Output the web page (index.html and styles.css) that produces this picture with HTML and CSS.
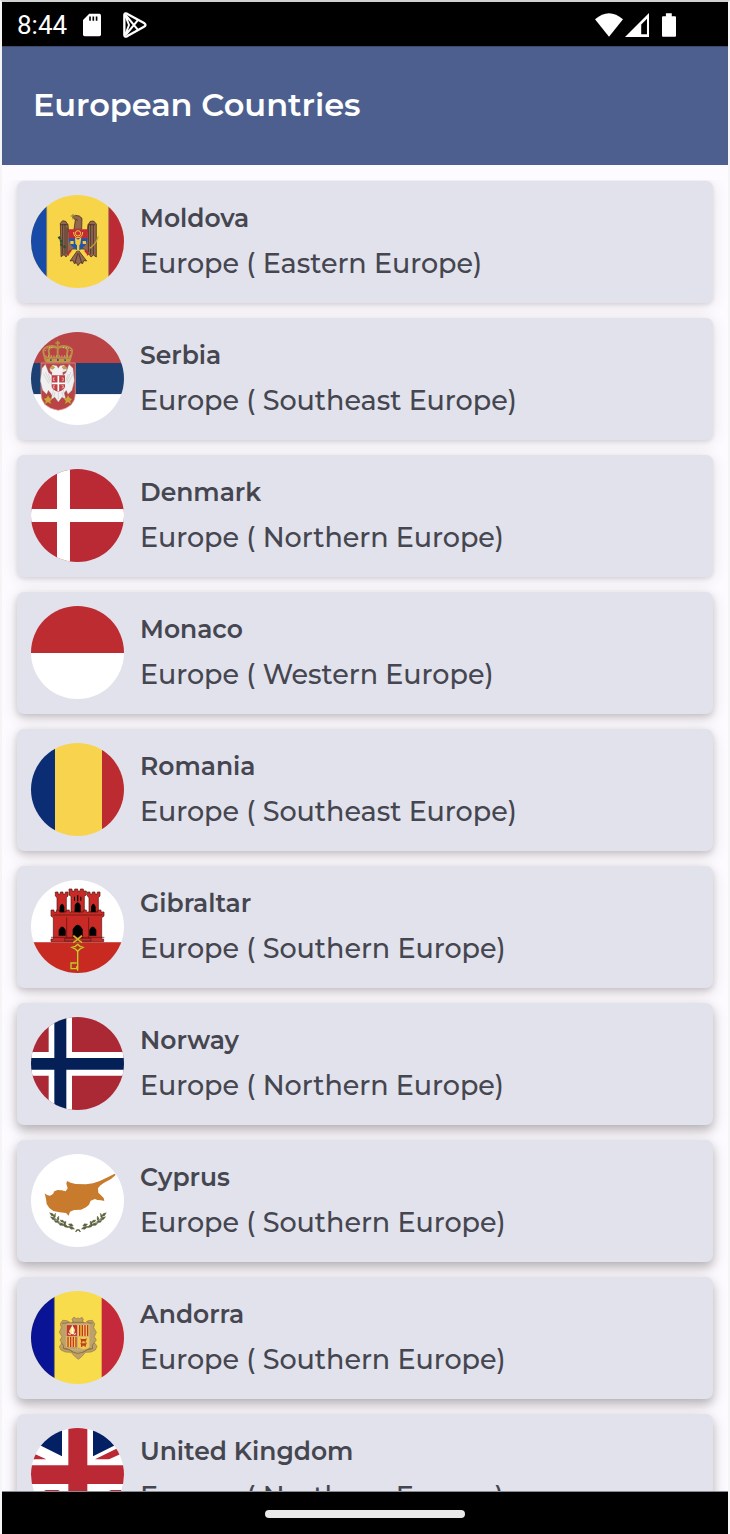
FILE: index.html
```html
<!DOCTYPE html>
<html lang="en">
<head>
<meta charset="utf-8">
<meta name="viewport" content="width=device-width, initial-scale=1">
<title>European Countries</title>
<link rel="stylesheet" href="styles.css">
</head>
<body>
<div class="status">
  <span class="time">8:44</span>
  <svg class="sd" viewBox="248 38 55 70" aria-hidden="true"><path fill="#fff" d="M267 39h31q5 0 5 5v58q0 5-5 5h-45q-5 0-5-5V58z"/><path d="M267 47h5v13h-5zM277 47h5v13h-5zM287 47h5v13h-5z"/></svg>
  <svg class="play" viewBox="368 34 72 78" aria-hidden="true"><g fill="none" stroke="#fff" stroke-width="7" stroke-linejoin="round"><path d="M372 43q0-6 8-4l51 28q9 6 0 11l-51 29q-8 3-8-4z"/><path stroke-width="6" d="M376 43l38 46M376 103l38-46M374 42l12 31-12 31"/></g></svg>
  <span class="signals">
    <svg class="wifi" viewBox="106 36 84 70" aria-hidden="true"><path fill="#fff" d="M148 106L106 54q42-36 84 0z"/></svg>
    <svg class="cell" viewBox="196 37 71 71" aria-hidden="true"><path fill="#fff" d="M267 37v71h-71z"/><path d="M261 54v46h-17V71z"/></svg>
    <svg class="battery" viewBox="306 36 43 72" aria-hidden="true"><path fill="#fff" d="M318 36h18v9h10q3 0 3 3v57q0 3-3 3h-37q-3 0-3-3V48q0-3 3-3h9z"/></svg>
  </span>
</div>
<header class="appbar"><h1>European Countries</h1></header>
<main class="content">
<ul class="list">
<li class="card">
  <svg class="flag" viewBox="34 27 279 279" role="img" aria-label="Flag of Moldova">
    <path fill="#f8d548" d="M34 27h279v279H34z"/><path fill="#184aa8" d="M34 27h47v279H34z"/><path fill="#bc2a36" d="M267 27h46v279h-46z"/><path stroke="#8a8060" stroke-width="2" d="M81 27v279M267 27v279"/>
    <g stroke="#30211b" stroke-width="2" stroke-linejoin="round">
      <path fill="#93684f" d="M122 112l7-8 9 2 7 10 2 22h56l2-22 7-10 10-1 8 9v99l-9-6-7 6-7-10-13-14h-36l-12 14-7 10-6-7-9 6z"/>
      <path fill="#93684f" d="M163 130l4-28-8-9 8-5 12 2 8 7-1 33z"/>
      <path fill="#93684f" d="M175 191l-24 34 9-1 4 9 6-3 5 9 7-9 7 3 3-9 9 1z"/>
      <path fill="none" d="M129 117v88M136 115v91M142 125v78M206 117v81M213 115v90M221 117v88M122 116h22M206 116h20M168 100l6 3M174 202l-8 28M177 202l9 28"/>
    </g>
    <path fill="#c22b36" d="M147 130h57v28h-57z"/><path fill="#1f55ad" d="M147 157h57q0 24-28 37-29-13-29-37z"/>
    <path fill="#f3c83c" d="M166 154l9 7 10-7-3 20-3 4v16h-7v-16l-5-5zM152 165h10v9h-10zM189 165h10v9h-10z"/>
    <circle cx="175" cy="142" r="8" fill="#cc3336" stroke="#f3c83c" stroke-width="3"/><path fill="none" stroke="#f3c83c" stroke-width="3" d="M162 138q0 16 13 17 14-1 14-17"/>
    <path stroke="#bd2c35" stroke-width="8" d="M154 193l-10 14M196 193l10 14"/><path stroke="#f0cc43" stroke-width="4" d="M159 194l-10 13M190 194l11 13"/>
    <path fill="none" stroke="#28513a" stroke-width="7" stroke-dasharray="8 3" d="M117 152q11 17 8 24 8 3 12 10"/><path fill="none" stroke="#c4a137" stroke-width="4" d="M236 151q-7 22-20 31l-6 5"/><path stroke="#8c783e" stroke-width="3" d="M153 90h14M160 84v16"/>
  </svg>
  <div class="info"><h2>Moldova</h2><p>Europe ( Eastern Europe)</p></div>
</li>
<li class="card">
  <svg class="flag" viewBox="34 28 279 279" role="img" aria-label="Flag of Serbia">
    <path fill="#b94345" d="M34 28h279v93H34z"/><path fill="#1d4073" d="M34 121h279v94H34z"/><path fill="#fff" d="M34 215h279v92H34z"/>
    <path fill="#b94345" stroke="#e5a3a0" stroke-width="2" d="M64 121h103v91q0 43-51 51-52-8-52-51z"/>
    <g fill="#f0f0f0" stroke="#a5a2a5" stroke-width="1"><path d="M92 145l-2-8 9-10 12 2 5 8 5-8 12-2 9 10-2 8-11 4 1 9 9-8 9-25 12 12 4 37-7 29-12 12-5-12-7 9-9 15-1-9-10 12-9-12-2 9-9-15-7-9-5 12-12-12-7-29 5-37 10-12 10 25 10 8v-9z"/><path d="M103 196l-9 35 11-8 11 15 11-15 12 8-10-35z"/><path fill="none" d="M71 153l17 30M77 148l14 30M86 154l7 19M161 153l-17 30M154 148l-13 30M146 154l-7 19M106 208l-4 14M116 207v22M126 208l5 14"/></g>
    <path fill="#bf3f46" d="M96 158h40v34q-3 11-20 15-17-4-20-15z"/><path stroke="#fff" stroke-width="5" d="M116 159v47M96 182h40"/><path fill="none" stroke="#f5d6d1" stroke-width="2" d="M106 166h-5v8h5M126 166h5v8h-5M106 189h-5v7h5M126 189h5v7h-5"/>
    <g fill="#d1a23b" stroke="#8c642c" stroke-width="1"><path d="M85 217l5 8 8 5-6 5 3 10-10-6-10 6 3-10-6-7 9-3zM145 217l5 8 8 5-6 5 3 10-10-6-10 6 3-10-6-7 9-3zM89 137l8-7 8 3-5 7zM143 137l-9-7-7 3 5 7z"/></g>
    <g fill="none" stroke="#b89046" stroke-width="6"><path d="M78 114l-7-25q-2-12 13-17 19-6 30 4 12-10 30-4 16 5 13 17l-7 25zM91 110L87 84q1-16 27-8M139 110l5-26q-3-16-30-8M114 74v37"/><path stroke-width="5" d="M114 54v18M107 61h14M78 105h73"/><path stroke="#c39a4c" stroke-width="11" d="M80 114h70"/></g><path fill="none" stroke="#fff1d4" stroke-width="3" stroke-dasharray="2 6" d="M76 85q7-14 27-9M153 85q-8-14-27-9M78 100h75"/><path fill="#365384" d="M112 108h5v7h-5zM91 110h5v5h-5zM134 110h5v5h-5z"/>
  </svg>
  <div class="info"><h2>Serbia</h2><p>Europe ( Southeast Europe)</p></div>
</li>
<li class="card">
  <svg class="flag" viewBox="31 469 93 93" role="img" aria-label="Flag of Denmark"><path fill="#b92a34" d="M31 469h93v93H31z"/><path fill="#fff" d="M57 469h13v93H57zM31 509h93v13H31z"/></svg>
  <div class="info"><h2>Denmark</h2><p>Europe ( Northern Europe)</p></div>
</li>
<li class="card">
  <svg class="flag" viewBox="0 0 93 93" role="img" aria-label="Flag of Monaco"><path fill="#bd2c30" d="M0 0h93v47H0z"/><path fill="#fff" d="M0 47h93v46H0z"/></svg>
  <div class="info"><h2>Monaco</h2><p>Europe ( Western Europe)</p></div>
</li>
<li class="card">
  <svg class="flag" viewBox="31 0 93 93" role="img" aria-label="Flag of Romania"><path fill="#0b2d73" d="M31 0h24v93H31z"/><path fill="#f7d34e" d="M55 0h47v93H55z"/><path fill="#bc2b2f" d="M102 0h22v93h-22z"/></svg>
  <div class="info"><h2>Romania</h2><p>Europe ( Southeast Europe)</p></div>
</li>
<li class="card">
  <svg class="flag" viewBox="34 32 279 279" role="img" aria-label="Flag of Gibraltar">
    <path fill="#fff" d="M34 32h279v187H34z"/><path fill="#c82a22" d="M34 219h279v92H34z"/>
    <g fill="#c92a25" stroke="#531513" stroke-width="2"><path d="M107 68h8v6h7v-6h8v6h7v-6h8v12l-5 5v43h-28V85l-5-5zM203 68h8v6h7v-6h8v6h7v-6h8v12l-5 5v43h-28V85l-5-5zM148 59h9v6h8v-6h9v6h8v-6h9v6h9v12l-6 4v54h-40V81l-6-4z"/><path d="M94 122h9v6h8v-6h9v6h20v-6h9v6h17v-6h9v6h17v-6h8v6h17v-6h9v6h9v-6h9v6h9v12l-7 5v64h6v8H94v-8h7v-64l-7-5z"/><path d="M101 137h147M94 204h160M141 144v61M207 144v61M135 207h79v8h-79z"/></g>
    <path d="M120 129v-17q7-17 14 0v17zM165 129v-21q9-19 18 0v21zM214 129v-17q7-17 14 0v17zM117 199v-17q10-21 21 0v17zM159 205v-25q15-28 30 0v25zM209 199v-17q10-21 21 0v17zM163 82h3v12h-3zM172 78h4v18h-4zM182 82h3v12h-3z"/>
    <g fill="none" stroke="#835915" stroke-width="7"><path d="M174 246v58M171 281h-17v17h17M161 199l26 21M187 199l-26 21"/><path d="M174 225l7 6 9 3-9 5-7 7-7-7-10-5 10-3z"/></g><g fill="none" stroke="#e5b82e" stroke-width="4"><path d="M174 246v58M171 281h-17v17h17v-7M161 199l26 21M187 199l-26 21"/><path d="M174 225l7 6 9 3-9 5-7 7-7-7-10-5 10-3z"/></g>
  </svg>
  <div class="info"><h2>Gibraltar</h2><p>Europe ( Southern Europe)</p></div>
</li>
<li class="card">
  <svg class="flag" viewBox="34 29 279 279" role="img" aria-label="Flag of Norway"><path fill="#ab2935" d="M34 29h279v279H34z"/><path fill="#fff" d="M87 29h70v279H87zM34 134h279v71H34z"/><path fill="#042057" d="M104 29h36v279h-36zM34 152h279v35H34z"/></svg>
  <div class="info"><h2>Norway</h2><p>Europe ( Northern Europe)</p></div>
</li>
<li class="card">
  <svg class="flag" viewBox="34 29 279 279" role="img" aria-label="Flag of Cyprus"><path fill="#fff" d="M34 29h279v279H34z"/>
    <path fill="#c87b2c" d="M75 147l7 5 9 2 9-5 4-8 10-4 12 1 12 3 6-9-4-14 2-8 11 5 15 4 31 1 21-3 20-7 21-10 24-12 3 4-14 12-22 12-11 8-6 8 1 13 7 7 9 9 2 9-10-2-11-1-7-3-13 5-5 12-9 8-15 7-21 1-12 5-4 12-8-8-19-2-19-4-12-9-8-12-2-15z"/>
    <g fill="#5c6440" stroke="#5c6440" stroke-width="1"><path id="leaf" d="M90 205l10 3 4 8-9-2zM92 217l9 2 8 8-10-1zM104 211l4-5-1 12-5 3zM103 228l12 1 4 7-12-2zM112 221l5-6 1 11-4 3zM116 237l12 0 4 7-11-1zM121 227l9 1 5 7-10-2zM131 241l10 2 6 7-12-2zM132 233l7-2-1 11-5 2zM145 246l12 1 8 7-11 1zM146 239l10-1 5 7-9 1z"/><use href="#leaf" transform="translate(350 0) scale(-1 1)"/></g>
    <path fill="none" stroke="#5c6440" stroke-width="4" d="M168 263l4-6h6l4 6"/><path fill="none" stroke="#5c6440" stroke-width="2" d="M95 207q24 37 68 45M255 207q-24 37-68 45"/></svg>
  <div class="info"><h2>Cyprus</h2><p>Europe ( Southern Europe)</p></div>
</li>
<li class="card">
  <svg class="flag" viewBox="34 29 279 279" role="img" aria-label="Flag of Andorra"><path fill="#f8dc4b" d="M34 29h279v279H34z"/><path fill="#091395" d="M34 29h70v279H34z"/><path fill="#c42a3b" d="M246 29h67v279h-67z"/><path stroke="#77724d" stroke-width="2" d="M104 29v279"/>
    <path fill="#bda169" stroke="#927849" stroke-width="2" d="M164 108q6 7 10 2 6 5 13-2 8 7 0 14 10 6 18-4l13-1 7 10-3 12 8 14-6 13 6 10-6 8 8 11-5 11-13 6-17 1-10 12-11 9-11-9-11-12-17-1-13-6-5-10 8-11-6-9 6-10-8-13 6-14-3-12 7-10 13 1q8 10 19 4-8-8 1-14z"/>
    <path fill="none" stroke="#907346" stroke-width="3" d="M127 126q14 0 22-4M202 122q9 5 17 3M124 184q12 8 7 17 20 0 28 11 15 9 33 0 9-10 27-11-5-9 5-17M132 202q18 1 28 10M219 202q-19 1-28 10M157 123h36"/>
    <path fill="#c63429" d="M141 131h31v33h-31z"/><path fill="#f0ca49" d="M175 131h33v33h-33zM141 166h31v31h-31zM175 166h33v30q-2 7-17 7-13-2-16-5z"/><path stroke="#c63429" stroke-width="4" d="M180 131v33M188 131v33M196 131v33M204 131v33M145 166v31M153 166v31M161 166v31M169 166v31"/>
    <path stroke="#e9d5ae" stroke-width="1" fill="none" d="M140 130h69v67q-10 9-34 9-24 0-35-9zM174 130v75M140 165h69"/><path fill="#f8e58f" d="M155 136h6l5 10-3 12h-10l-5-8z"/><path stroke="#fff" stroke-width="3" d="M145 157l8 3M162 160l7-3M158 132v27"/><path fill="#bd3c24" d="M182 171l4 2h12l4-3-2 6-2 4v4h-3v-4h-7v4h-4v-6zM182 184l4 2h12l4-3-2 6-2 4v4h-3v-4h-7v4h-4v-6z"/>
  </svg>
  <div class="info"><h2>Andorra</h2><p>Europe ( Southern Europe)</p></div>
</li>
<li class="card">
  <svg class="flag" viewBox="94 88 279 279" role="img" aria-label="Flag of the United Kingdom"><path fill="#fff" d="M94 88h279v279H94z"/><path fill="#032064" d="M187 88v85L90 124V88zM280 88v85l97-49V88zM187 367v-85l-97 49v36zM280 367v-85l97 49v36z"/><path fill="#ba2934" d="M90 159l50 23H90zM286 182l91-45v23l-49 22zM90 319l91-45h-42l-49 23zM328 274l49 23v-23zM206 88h57v279h-57zM94 200h279v56H94z"/></svg>
  <div class="info"><h2>United Kingdom</h2><p>Europe ( Northern Europe)</p></div>
</li>
</ul>
</main>
<div class="navbar"><span class="handle"></span></div>
</body>
</html>
```
FILE: styles.css
```css
* { box-sizing: border-box; }
body {
  margin: 0;
  height: 100vh;
  display: flex;
  flex-direction: column;
  overflow: hidden;
  background: #fdfbff;
  border: 2px solid #f5f5f6;
  border-top-color: #d0d2d2;
  border-bottom: 0;
  font-family: Montserrat, Inter, sans-serif;
  color: #45464f;
}
svg { display: block; flex: none; }
h1, h2, p { margin: 0; }
.status {
  flex: none;
  height: 44px;
  padding: 1px 52px 0 15px;
  display: flex;
  align-items: center;
  background: #000;
  color: #fff;
}
.time { font: 26px/44px Roboto, sans-serif; }
.sd { width: 18px; height: 24px; margin-left: 16px; }
.play { width: 24px; height: 26px; margin-left: 22px; }
.signals { display: flex; align-items: center; margin-left: auto; }
.wifi { width: 28px; height: 24px; }
.cell { width: 24px; height: 24px; margin-left: 2px; }
.battery { width: 14px; height: 24px; margin-left: 13px; }
.appbar {
  flex: none;
  height: 119px;
  padding: 0 31px 2px;
  display: flex;
  align-items: center;
  background: #4c5f8f;
  border-top: 1px solid #3c4a70;
  color: #fff;
}
.appbar h1 { font-size: 32px; line-height: 40px; font-weight: 600; }
.content {
  flex: 1;
  min-height: 0;
  margin-top: 15px;
  overflow: hidden;
}
.list {
  list-style: none;
  margin: 0;
  padding: 1px 15px 15px;
  display: flex;
  flex-direction: column;
  gap: 15px;
}
.card {
  display: flex;
  gap: 16px;
  padding: 14px 15px 15px 14px;
  background: #e1e2ec;
  border-radius: 7px;
  box-shadow: 0 2px 4px rgba(60, 40, 50, .12), 0 2px 16px rgba(60, 40, 50, .12);
}
.card:nth-child(n+4) { box-shadow: 0 3px 6px rgba(60, 50, 55, .2), 0 4px 16px rgba(60, 40, 50, .15); }
.card:nth-child(n+7) { box-shadow: 0 5px 8px rgba(60, 55, 58, .24), 0 5px 16px rgba(60, 45, 50, .18); }
.flag { width: 93px; height: 93px; border-radius: 50%; }
.info { min-width: 0; line-height: 46px; white-space: nowrap; }
.info h2 { font-size: 25px; line-height: 46px; font-weight: 600; }
.info p { font-size: 27px; line-height: 46px; font-weight: 500; }
.navbar {
  flex: none;
  height: 43px;
  padding-top: 1px;
  display: flex;
  align-items: center;
  justify-content: center;
  background: #000;
  border-top: 1px solid #898a91;
}
.handle { width: 200px; height: 8px; border-radius: 4px; background: #e9e9e9; }
```
